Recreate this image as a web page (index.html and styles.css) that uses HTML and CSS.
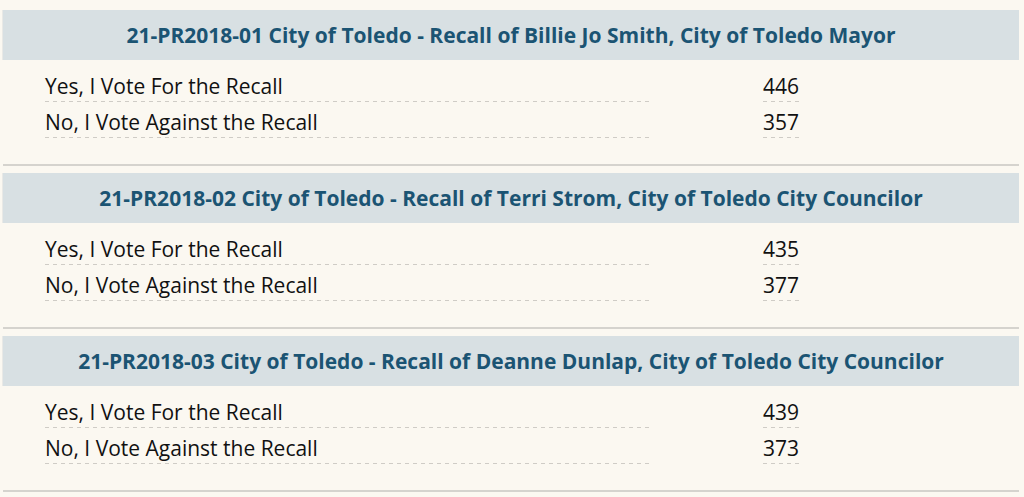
FILE: index.html
```html
<!DOCTYPE html>
<html>
<head>
<meta charset="utf-8">
<link rel="stylesheet" href="styles.css">
</head>
<body>
<div class="page">
  <section class="contest">
    <h2 class="contest-title">21-PR2018-01 City of Toledo - Recall of Billie Jo Smith, City of Toledo Mayor</h2>
    <div class="choices">
      <div class="choice"><span class="name">Yes, I Vote For the Recall</span><span class="votes"><span class="num">446</span></span></div>
      <div class="choice"><span class="name">No, I Vote Against the Recall</span><span class="votes"><span class="num">357</span></span></div>
    </div>
  </section>
  <section class="contest">
    <h2 class="contest-title">21-PR2018-02 City of Toledo - Recall of Terri Strom, City of Toledo City Councilor</h2>
    <div class="choices">
      <div class="choice"><span class="name">Yes, I Vote For the Recall</span><span class="votes"><span class="num">435</span></span></div>
      <div class="choice"><span class="name">No, I Vote Against the Recall</span><span class="votes"><span class="num">377</span></span></div>
    </div>
  </section>
  <section class="contest">
    <h2 class="contest-title">21-PR2018-03 City of Toledo - Recall of Deanne Dunlap, City of Toledo City Councilor</h2>
    <div class="choices">
      <div class="choice"><span class="name">Yes, I Vote For the Recall</span><span class="votes"><span class="num">439</span></span></div>
      <div class="choice"><span class="name">No, I Vote Against the Recall</span><span class="votes"><span class="num">373</span></span></div>
    </div>
  </section>
</div>
</body>
</html>
```

FILE: styles.css
```css
html, body {
  margin: 0;
  padding: 0;
  background: #fbf8f1;
}
body {
  font-family: "Open Sans", "DejaVu Sans", sans-serif;
  color: #111;
}
.page {
  padding: 10px 5px 0 3px;
}
.contest {
  border-bottom: 2px solid #d5d3ce;
  margin-bottom: 7px;
}
.contest-title {
  margin: 0;
  height: 50px;
  box-sizing: border-box;
  padding-top: 1px;
  line-height: 49px;
  background: #d8e0e3;
  box-shadow: -1px 0 0 #e9e9e6;
  color: #1b5473;
  font-size: 21px;
  font-weight: 700;
  text-align: center;
}
.choices {
  padding: 6px 0 26px 42px;
}
.choice {
  display: flex;
  margin-top: 7px;
  font-size: 21px;
  line-height: 27px;
}
.name, .num {
  background-image: repeating-linear-gradient(to right, #cfccc6 0 4px, transparent 4px 8px);
  background-size: 100% 1px;
  background-position: left bottom;
  background-repeat: no-repeat;
}
.name {
  width: 607px;
  padding-bottom: 2px;
}
.votes {
  padding-left: 111px;
}
.num {
  display: inline-block;
  padding-bottom: 2px;
}
```
